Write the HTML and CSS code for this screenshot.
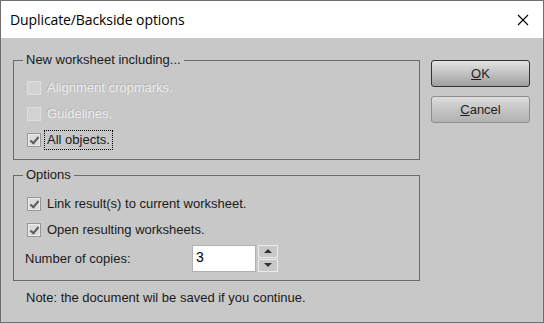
FILE: index.html
```html
<!DOCTYPE html>
<html lang="en">
<head>
    <meta charset="UTF-8">
    <title>Duplicate/Backside options</title>
    <link rel="stylesheet" href="styles.css">
</head>
<body>
    <div class="window">
        <div class="titlebar">
            <span class="title">Duplicate/Backside options</span>
            <span class="close">
                <svg width="12" height="12" viewBox="0 0 12 12"><path d="M1 1 L11 11 M11 1 L1 11" stroke="#000" stroke-width="1.1" fill="none"/></svg>
            </span>
        </div>
        <div class="content">
            <div class="groups">
                <fieldset class="group g1">
                    <legend>New worksheet including...</legend>
                    <div class="row disabled"><span class="cb"></span><span class="lbl">Alignment cropmarks.</span></div>
                    <div class="row disabled"><span class="cb"></span><span class="lbl">Guidelines.</span></div>
                    <div class="row"><span class="cb checked"></span><span class="lbl focus">All objects.</span></div>
                </fieldset>
                <fieldset class="group g2">
                    <legend>Options</legend>
                    <div class="row"><span class="cb checked"></span><span class="lbl">Link result(s) to current worksheet.</span></div>
                    <div class="row"><span class="cb checked"></span><span class="lbl">Open resulting worksheets.</span></div>
                    <div class="row copies">
                        <span class="copies-label">Number of copies:</span>
                        <span class="spin-input">3</span>
                        <span class="spin-buttons">
                            <span class="spin-btn"><span class="tri up"></span></span>
                            <span class="spin-btn"><span class="tri down"></span></span>
                        </span>
                    </div>
                </fieldset>
                <p class="note">Note: the document wil be saved if you continue.</p>
            </div>
            <div class="buttons">
                <a href="#" class="btn default"><u>O</u>K</a>
                <a href="#" class="btn"><u>C</u>ancel</a>
            </div>
        </div>
    </div>
</body>
</html>
```

FILE: styles.css
```css
body {
    margin: 0;
    padding: 0;
    font-family: 'Liberation Sans', Arial, sans-serif;
    font-size: 13px;
    color: #1a1a1a;
}
.window {
    width: 544px;
    height: 323px;
    box-sizing: border-box;
    border: 1px solid #6f6f6f;
    background-color: #c8c8c8;
}
.titlebar {
    height: 37px;
    background-color: white;
    display: flex;
    align-items: center;
    justify-content: space-between;
    padding: 0 14px 0 9px;
}
.title {
    font-family: 'Open Sans', 'Noto Sans', sans-serif;
    font-size: 14px;
    color: #000;
    letter-spacing: -0.1px;
}
.close {
    display: flex;
    margin-top: 1px;
}
.content {
    display: grid;
    grid-template-columns: 407px 99px;
    column-gap: 11px;
    padding: 14px 13px 0 12px;
}
.group {
    margin: 0;
    border: 1px solid #6a6a6a;
    padding: 7px 10px 6px 11px;
    min-width: 0;
}
.group legend {
    padding: 0 3px;
    margin-left: -2px;
    line-height: 16px;
}
.g2 {
    margin-top: 7px;
    padding-top: 8px;
    padding-bottom: 8px;
}
.row {
    height: 26px;
    display: flex;
    align-items: center;
}
.cb {
    width: 14px;
    height: 14px;
    box-sizing: border-box;
    margin-left: 2px;
    margin-right: 6px;
    border: 1px solid #979797;
    background-color: #dadada;
    box-shadow: inset 0 0 0 1px #ececec;
    position: relative;
}
.cb.checked::after {
    content: "";
    position: absolute;
    left: 4px;
    top: 1px;
    width: 3px;
    height: 7px;
    border-right: 2px solid #5c5c5c;
    border-bottom: 2px solid #5c5c5c;
    transform: rotate(40deg);
}
.disabled .cb {
    border-color: #dedede;
    background-color: #d2d2d2;
    box-shadow: none;
}
.disabled .lbl {
    color: #ececec;
    text-shadow: -1px -1px 0 #b4b4b4;
}
.lbl {
    line-height: 16px;
}
.lbl.focus {
    outline: 1px dotted #000;
    outline-offset: 1px;
    margin-left: -1px;
    padding: 0 1px;
}
.copies {
    height: 27px;
    margin-top: 2px;
}
.copies-label {
    width: 167px;
}
.spin-input {
    width: 64px;
    height: 27px;
    box-sizing: border-box;
    border: 1px solid #b0b0b0;
    background-color: white;
    font-size: 14px;
    color: #000;
    padding: 3px 0 0 3px;
}
.spin-buttons {
    display: flex;
    flex-direction: column;
    margin-left: 2px;
}
.spin-btn {
    width: 20px;
    height: 13px;
    box-sizing: border-box;
    border: 1px solid #ececec;
    margin-bottom: 1px;
    display: flex;
    align-items: center;
    justify-content: center;
}
.tri {
    width: 0;
    height: 0;
    border-left: 4px solid transparent;
    border-right: 4px solid transparent;
}
.tri.up {
    border-bottom: 4px solid #333;
}
.tri.down {
    border-top: 4px solid #333;
}
.note {
    margin: 9px 0 0 13px;
    line-height: 16px;
}
.buttons {
    display: flex;
    flex-direction: column;
    gap: 9px;
    padding-top: 8px;
}
.btn {
    height: 27px;
    box-sizing: border-box;
    display: flex;
    align-items: center;
    justify-content: center;
    color: #1e1e1e;
    text-decoration: none;
    border: 1px solid #8e8e8e;
    border-radius: 3px;
    background: linear-gradient(#dedede, #c4c4c4 50%, #b2b2b2);
}
.btn.default {
    border-color: #333;
    background: linear-gradient(#e2e2e2, #c2c2c2 50%, #9e9e9e);
}
```
